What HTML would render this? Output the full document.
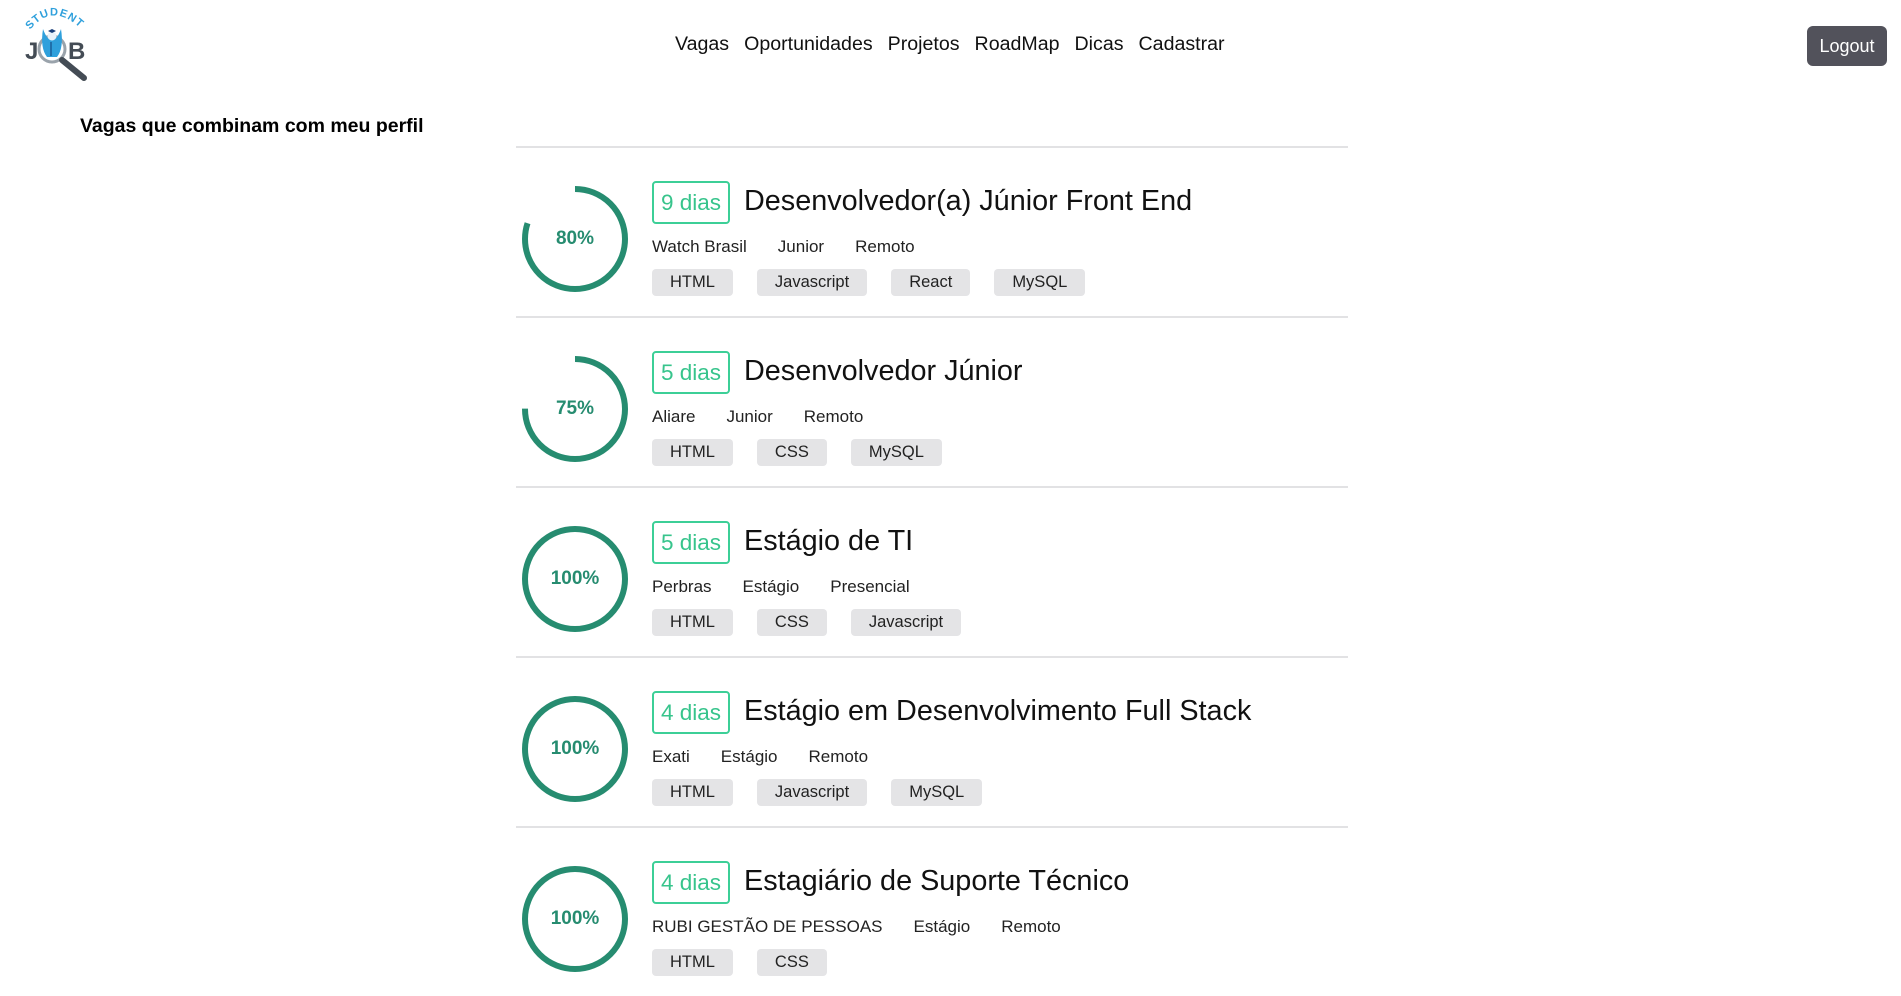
<!DOCTYPE html>
<html><head><meta charset="utf-8">
<style>
*{box-sizing:border-box;margin:0;padding:0}
html,body{width:1901px;height:925px;overflow:hidden;background:#fff;font-family:"Liberation Sans",sans-serif;color:#111}
.logo{position:absolute;left:0;top:0;width:100px;height:85px}
nav{position:absolute;top:33px;left:675px;font-size:19.6px;white-space:nowrap}
nav span{margin-right:15px;color:#111}
.logout{position:absolute;left:1807px;top:26px;width:80px;height:40px;background:#52525b;color:#fff;border-radius:6px;font-size:18px;line-height:40px;text-align:center}
h3{position:absolute;left:80px;top:115px;font-size:19.5px;font-weight:bold;color:#000}
.list{position:absolute;left:516px;top:146px;width:832px}
.row{height:170px;border-top:2px solid #e2e2e4;position:relative}
.circ{position:absolute;left:3px;top:35px;width:112px;height:112px}
.circ span{position:absolute;left:0;top:0;width:112px;line-height:112px;text-align:center;font-weight:bold;font-size:19px;color:#268c70}
.badge{position:absolute;left:136px;top:33px;height:43px;padding:0 7px;border:2px solid #3ccf97;border-radius:4px;color:#37c48c;font-size:22.5px;line-height:39px}
.title{position:absolute;left:228px;top:35px;font-size:28.8px;line-height:36px;color:#111;white-space:nowrap}
.meta{position:absolute;left:136px;top:89px;font-size:17px;color:#222;white-space:nowrap}
.meta span{margin-right:31px}
.tags{position:absolute;left:136px;top:121px;display:flex;gap:24px}
.tags span{background:#e4e4e6;border-radius:4px;height:27px;line-height:27px;padding:0 18px;font-size:16.5px;color:#222}
</style></head><body>
<svg class="logo" viewBox="0 0 100 85">
 <path id="arc" d="M30 30 Q52 2 80 28" fill="none"/>
 <text font-size="11" font-weight="bold" fill="#2fa0dc" font-family="Liberation Sans,sans-serif" letter-spacing="1"><textPath href="#arc">STUDENT</textPath></text>
 <text x="25" y="59" font-size="24" font-weight="bold" fill="#444c55" font-family="Liberation Sans,sans-serif">J</text>
 <text x="68" y="59" font-size="24" font-weight="bold" fill="#444c55" font-family="Liberation Sans,sans-serif">B</text>
 <circle cx="52" cy="49" r="13" fill="none" stroke="#9aa3ab" stroke-width="3"/>
 <path d="M43 29 Q40 48 47 57 L57 57 Q64 48 61 29 Q57 40 52 40 Q47 40 43 29Z" fill="#2fa0dc"/>
 <circle cx="52" cy="36" r="4.5" fill="#e8f2fa"/>
 <path d="M48 31 L52 29 L56 31 L52 33Z" fill="#1a3f7a"/>
 <line x1="51" y1="42" x2="51" y2="56" stroke="#1a5f9a" stroke-width="1.5"/>
 <line x1="62" y1="60" x2="84" y2="78" stroke="#444c55" stroke-width="6" stroke-linecap="round"/>
</svg>
<nav><span>Vagas</span><span>Oportunidades</span><span>Projetos</span><span>RoadMap</span><span>Dicas</span><span>Cadastrar</span></nav>
<div class="logout">Logout</div>
<h3>Vagas que combinam com meu perfil</h3>
<div class="list">
 <div class="row">
  <div class="circ"><svg width="112" height="112"><circle cx="56" cy="56" r="50" fill="none" stroke="#268c70" stroke-width="6" stroke-dasharray="251.3 314.2" transform="rotate(-90 56 56)"/></svg><span>80%</span></div>
  <div class="badge">9 dias</div><div class="title">Desenvolvedor(a) Júnior Front End</div>
  <div class="meta"><span>Watch Brasil</span><span>Junior</span><span>Remoto</span></div>
  <div class="tags"><span>HTML</span><span>Javascript</span><span>React</span><span>MySQL</span></div>
 </div>
 <div class="row">
  <div class="circ"><svg width="112" height="112"><circle cx="56" cy="56" r="50" fill="none" stroke="#268c70" stroke-width="6" stroke-dasharray="235.6 314.2" transform="rotate(-90 56 56)"/></svg><span>75%</span></div>
  <div class="badge">5 dias</div><div class="title">Desenvolvedor Júnior</div>
  <div class="meta"><span>Aliare</span><span>Junior</span><span>Remoto</span></div>
  <div class="tags"><span>HTML</span><span>CSS</span><span>MySQL</span></div>
 </div>
 <div class="row">
  <div class="circ"><svg width="112" height="112"><circle cx="56" cy="56" r="50" fill="none" stroke="#268c70" stroke-width="6"/></svg><span>100%</span></div>
  <div class="badge">5 dias</div><div class="title">Estágio de TI</div>
  <div class="meta"><span>Perbras</span><span>Estágio</span><span>Presencial</span></div>
  <div class="tags"><span>HTML</span><span>CSS</span><span>Javascript</span></div>
 </div>
 <div class="row">
  <div class="circ"><svg width="112" height="112"><circle cx="56" cy="56" r="50" fill="none" stroke="#268c70" stroke-width="6"/></svg><span>100%</span></div>
  <div class="badge">4 dias</div><div class="title">Estágio em Desenvolvimento Full Stack</div>
  <div class="meta"><span>Exati</span><span>Estágio</span><span>Remoto</span></div>
  <div class="tags"><span>HTML</span><span>Javascript</span><span>MySQL</span></div>
 </div>
 <div class="row">
  <div class="circ"><svg width="112" height="112"><circle cx="56" cy="56" r="50" fill="none" stroke="#268c70" stroke-width="6"/></svg><span>100%</span></div>
  <div class="badge">4 dias</div><div class="title">Estagiário de Suporte Técnico</div>
  <div class="meta"><span>RUBI GESTÃO DE PESSOAS</span><span>Estágio</span><span>Remoto</span></div>
  <div class="tags"><span>HTML</span><span>CSS</span></div>
 </div>
</div>
</body></html>
